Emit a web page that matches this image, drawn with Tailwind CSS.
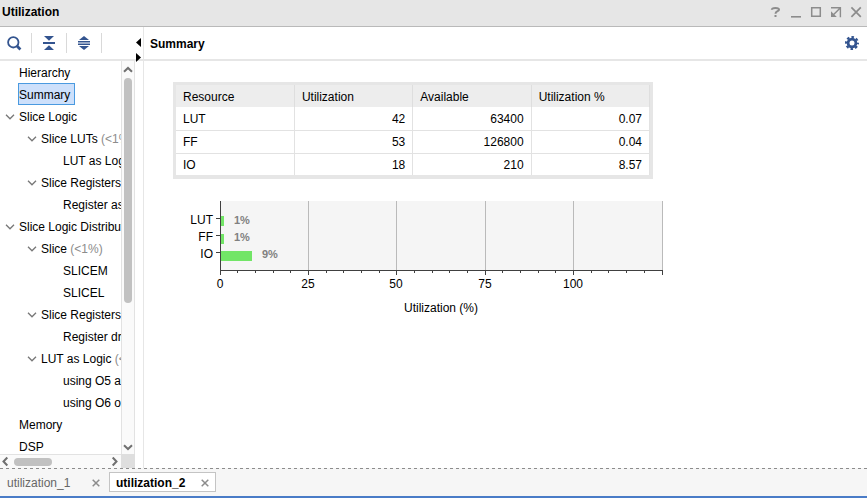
<!DOCTYPE html>
<html lang="en">
<head>
<meta charset="utf-8">
<title>Utilization</title>
<script src="https://cdn.jsdelivr.net/npm/@tailwindcss/browser@4"></script>
</head>
<body class="flex h-screen flex-col overflow-hidden bg-white font-['Liberation_Sans',Arial,sans-serif] text-[12px] leading-4 text-black">
<svg class="hidden" aria-hidden="true">
  <symbol id="down" viewBox="0 0 10 6"><path d="M1 .8 5 4.800 9 .8" fill="none" stroke="currentColor" stroke-width="1.3"/></symbol>
  <symbol id="chev" viewBox="0 0 10 7"><path d="M1 1.200 5 5 9 1.200" fill="none" stroke="currentColor" stroke-width="2"/></symbol>
  <symbol id="close" viewBox="0 0 8 8"><path d="M.7.7 7.300 7.300M7.300.7.7 7.300" fill="none" stroke="currentColor" stroke-width="1.5"/></symbol>
</svg>

<header class="flex h-[27px] shrink-0 items-center border-b border-[#b9b9b9] bg-[#e6e6e6] pr-[5px] pl-[2px]">
  <h1 class="grow pb-[2px] font-bold">Utilization</h1>
  <div class="flex items-center gap-2 pb-[2px] text-[#8c8c8c]">
    <button type="button" aria-label="Help" class="w-3"><svg class="h-3 w-3" viewBox="0 0 12 12" fill="none" stroke="currentColor" stroke-width="2"><path d="M1.800 3.800C1.800 2 3.500 1.900 5.500 1.900 7.800 1.900 9 2.200 9 3.700 9 5.400 5.500 5.100 5.500 7.800M5.500 9v2"/></svg></button>
    <button type="button" aria-label="Minimize" class="w-3"><svg class="h-3 w-3" viewBox="0 0 12 12"><path d="M1 10h10v1.600H1z" fill="currentColor"/></svg></button>
    <button type="button" aria-label="Maximize" class="w-3"><svg class="h-3 w-3" viewBox="0 0 12 12" fill="none" stroke="currentColor" stroke-width="1.5"><path d="M1.700 1.700h8.600v8.600H1.700z"/></svg></button>
    <button type="button" aria-label="Float" class="w-3"><svg class="h-3 w-3" viewBox="0 0 12 12" fill="none" stroke="currentColor" stroke-width="1.4"><path d="M1 1.700h9.400v9.600M9.700 2.400 3.400 8.700"/><path d="M1 5.200V11h5.800z" fill="currentColor" stroke="none"/></svg></button>
    <button type="button" aria-label="Close" class="w-3"><svg class="h-3 w-3" viewBox="0 0 12 12" fill="none" stroke="currentColor" stroke-width="1.7"><path d="M1.400 1.400l9.400 9.400M10.800 1.400 1.400 10.800"/></svg></button>
  </div>
</header>

<main class="relative flex min-h-0 grow">
  <section class="flex w-[144px] shrink-0 flex-col border-r border-[#e6e6e6]" aria-label="Report sections">
    <div class="flex h-[34px] shrink-0 items-center border-b-2 border-[#e6e6e6] pl-[6px] text-[#33548f]">
      <button type="button" aria-label="Search" class="mr-[9px] w-4"><svg class="h-4 w-4" viewBox="0 0 16 16" fill="none" stroke="currentColor"><circle cx="7.300" cy="7.300" r="5.200" stroke-width="1.8"/><path d="M11 11l3.400 3.400" stroke-width="2.8"/></svg></button>
      <span class="h-5 w-px bg-[#d9d9d9]"></span>
      <button type="button" aria-label="Collapse all" class="mx-[9px] w-4"><svg class="h-4 w-4" viewBox="0 0 16 16" fill="currentColor"><path d="M3 1h10L8 5.800zM2 7h12v2H2zM3 15h10L8 10.200z"/></svg></button>
      <span class="h-5 w-px bg-[#d9d9d9]"></span>
      <button type="button" aria-label="Expand all" class="mx-[9px] w-4"><svg class="h-4 w-4" viewBox="0 0 16 16" fill="currentColor"><path d="M3 5h10L8 1zM2 6h12v1.500H2zM2 8.500h12V10H2zM3 11h10l-5 4z"/></svg></button>
      <span class="h-5 w-px bg-[#d9d9d9]"></span>
    </div>
    <div class="mr-2 grid min-h-0 grow grid-cols-[minmax(0,1fr)_14px] grid-rows-[minmax(0,1fr)_14px]">
      <ul class="overflow-hidden pt-px leading-[22px] whitespace-nowrap">
        <li class="pl-[19px]">Hierarchy</li>
        <li class="flex h-[22px] pl-[19px]"><span class="h-5 bg-[#cde0fb] pr-1 outline-1 outline-[#4a9ae0]" aria-current="true">Summary</span></li>
        <li>
          <div class="flex items-center pl-[5px]"><button type="button" aria-label="Collapse Slice Logic" class="mr-1 text-[#777]"><svg class="h-[6px] w-[10px]"><use href="#down"/></svg></button>Slice Logic</div>
          <ul>
            <li>
              <div class="flex items-center pl-[27px]"><button type="button" aria-label="Collapse Slice LUTs" class="mr-1 text-[#777]"><svg class="h-[6px] w-[10px]"><use href="#down"/></svg></button>Slice LUTs&nbsp;<span class="text-[#8c8c8c]">(&lt;1%)</span></div>
              <ul><li class="pl-[63px]">LUT as Logic</li></ul>
            </li>
            <li>
              <div class="flex items-center pl-[27px]"><button type="button" aria-label="Collapse Slice Registers" class="mr-1 text-[#777]"><svg class="h-[6px] w-[10px]"><use href="#down"/></svg></button>Slice Registers</div>
              <ul><li class="pl-[63px]">Register as Flip Flop</li></ul>
            </li>
          </ul>
        </li>
        <li>
          <div class="flex items-center pl-[5px]"><button type="button" aria-label="Collapse Slice Logic Distribution" class="mr-1 text-[#777]"><svg class="h-[6px] w-[10px]"><use href="#down"/></svg></button>Slice Logic Distribution</div>
          <ul>
            <li>
              <div class="flex items-center pl-[27px]"><button type="button" aria-label="Collapse Slice" class="mr-1 text-[#777]"><svg class="h-[6px] w-[10px]"><use href="#down"/></svg></button>Slice&nbsp;<span class="text-[#8c8c8c]">(&lt;1%)</span></div>
              <ul><li class="pl-[63px]">SLICEM</li><li class="pl-[63px]">SLICEL</li></ul>
            </li>
            <li>
              <div class="flex items-center pl-[27px]"><button type="button" aria-label="Collapse Slice Registers" class="mr-1 text-[#777]"><svg class="h-[6px] w-[10px]"><use href="#down"/></svg></button>Slice Registers</div>
              <ul><li class="pl-[63px]">Register driven</li></ul>
            </li>
            <li>
              <div class="flex items-center pl-[27px]"><button type="button" aria-label="Collapse LUT as Logic" class="mr-1 text-[#777]"><svg class="h-[6px] w-[10px]"><use href="#down"/></svg></button>LUT as Logic&nbsp;<span class="text-[#8c8c8c]">(&lt;1%)</span></div>
              <ul><li class="pl-[63px]">using O5 and O6</li><li class="pl-[63px]">using O6 output only</li></ul>
            </li>
          </ul>
        </li>
        <li class="pl-[19px]">Memory</li>
        <li class="pl-[19px]">DSP</li>
      </ul>
      <div class="flex flex-col items-center border-x border-[#e2e2e2] bg-[#fafafa] text-[#707070]">
        <button type="button" aria-label="Scroll up" class="flex h-[17px] items-center"><svg class="h-[7px] w-[10px] rotate-180"><use href="#chev"/></svg></button>
        <div class="flex w-2 grow flex-col"><div class="h-[62%] rounded-full bg-[#c1c1c1]"></div></div>
        <button type="button" aria-label="Scroll down" class="flex h-[13px] items-center"><svg class="h-[7px] w-[10px]"><use href="#chev"/></svg></button>
      </div>
      <div class="flex items-center border-t border-[#e2e2e2] bg-[#fafafa] text-[#707070]">
        <button type="button" aria-label="Scroll left" class="flex w-[10px] justify-center"><svg class="h-[7px] w-[10px] shrink-0 rotate-90"><use href="#chev"/></svg></button>
        <div class="mx-1 grow"><div class="h-2 w-[42%] rounded-full bg-[#c1c1c1]"></div></div>
        <button type="button" aria-label="Scroll right" class="flex w-[12px] justify-center"><svg class="h-[7px] w-[10px] shrink-0 -rotate-90"><use href="#chev"/></svg></button>
      </div>
      <div class="bg-[#dedede]"></div>
    </div>
  </section>

  <div class="absolute top-[11px] left-[136px] flex flex-col gap-[6px]">
    <button type="button" aria-label="Hide section list" class="h-[9px] w-[5px]"><svg class="block h-[9px] w-[5px]" viewBox="0 0 5 9"><path d="M5 0v9L0 4.500z"/></svg></button>
    <button type="button" aria-label="Show section list" class="h-[9px] w-[5px]"><svg class="block h-[9px] w-[5px]" viewBox="0 0 5 9"><path d="M0 0v9l5-4.500z"/></svg></button>
  </div>

  <section class="flex min-w-0 grow flex-col">
    <div class="flex h-[34px] shrink-0 items-center border-b-2 border-[#e6e6e6] pr-2 pl-[6px]">
      <h2 class="grow pt-[2px] font-bold">Summary</h2>
      <button type="button" aria-label="Settings" class="text-[#33548f]"><svg class="h-[14px] w-[14px]" viewBox="0 0 14 14" fill="none" stroke="currentColor"><circle cx="7" cy="7" r="3.900" stroke-width="2.8"/><circle cx="7" cy="7" r="5.900" stroke-width="2.2" stroke-dasharray="2.5 2.134" stroke-dashoffset="1.25"/></svg></button>
    </div>
    <div class="min-h-0 grow overflow-hidden pt-[21px] pl-[29px]">
      <div class="w-[480px] max-w-full border-3 border-b-4 border-[#e6e6e6]">
        <table class="w-full table-fixed border-collapse">
          <thead>
            <tr class="h-[22px] bg-[#ededed] text-left">
              <th class="border-r border-[#dedede] px-[7px] pt-[2px] font-normal">Resource</th>
              <th class="border-r border-[#dedede] px-[7px] pt-[2px] font-normal">Utilization</th>
              <th class="border-r border-[#dedede] px-[7px] pt-[2px] font-normal">Available</th>
              <th class="border-r border-[#dedede] px-[7px] pt-[2px] font-normal">Utilization %</th>
            </tr>
          </thead>
          <tbody class="text-right">
            <tr class="h-[23px] border-b border-[#e2e2e2]"><td class="border-r border-[#e2e2e2] px-[7px] pt-px text-left">LUT</td><td class="border-r border-[#e2e2e2] px-[7px] pt-px">42</td><td class="border-r border-[#e2e2e2] px-[7px] pt-px">63400</td><td class="border-r border-[#e2e2e2] px-[7px] pt-px">0.07</td></tr>
            <tr class="h-[23px] border-b border-[#e2e2e2]"><td class="border-r border-[#e2e2e2] px-[7px] pt-px text-left">FF</td><td class="border-r border-[#e2e2e2] px-[7px] pt-px">53</td><td class="border-r border-[#e2e2e2] px-[7px] pt-px">126800</td><td class="border-r border-[#e2e2e2] px-[7px] pt-px">0.04</td></tr>
            <tr class="h-[22px]"><td class="border-r border-[#e2e2e2] px-[7px] pt-px text-left">IO</td><td class="border-r border-[#e2e2e2] px-[7px] pt-px">18</td><td class="border-r border-[#e2e2e2] px-[7px] pt-px">210</td><td class="border-r border-[#e2e2e2] px-[7px] pt-px">8.57</td></tr>
          </tbody>
        </table>
      </div>
      <svg class="mt-[22px] block h-[120px] w-[500px]" viewBox="0 0 500 120" role="img" aria-label="Utilization (%) by resource">
        <path d="M47 0h443v69H47z" fill="#f5f5f5"/>
        <path d="M135.500 0v69M223.500 0v69M312.500 0v69M400.500 0v69M489.500 0v69" stroke="#bababa"/>
        <path d="M48 15h3v10h-3zM48 33h3v10h-3zM48 50h31v10H48z" fill="#72e567"/>
        <path d="M47.500 0v74M43 17.500h4M43 34.500h4M43 51.500h4M47 69.500h443M64.500 70v2M82.500 70v2M100.500 70v2M117.500 70v2M135.500 70v4M153.500 70v2M170.500 70v2M188.500 70v2M206.500 70v2M223.500 70v4M241.500 70v2M259.500 70v2M276.500 70v2M294.500 70v2M312.500 70v4M329.500 70v2M347.500 70v2M365.500 70v2M382.500 70v2M400.500 70v4M418.500 70v2M435.500 70v2M453.500 70v2M471.500 70v2M489.500 70v4" stroke="#404040"/>
        <g text-anchor="end"><text x="40" y="23">LUT</text><text x="40" y="40">FF</text><text x="40" y="57">IO</text></g>
        <g class="text-[11px] font-bold" fill="#808080"><text x="61" y="23">1%</text><text x="61" y="40">1%</text><text x="89" y="57">9%</text></g>
        <g text-anchor="middle"><text x="47" y="87">0</text><text x="135" y="87">25</text><text x="223" y="87">50</text><text x="312" y="87">75</text><text x="400" y="87">100</text><text x="268" y="111">Utilization (%)</text></g>
      </svg>
    </div>
  </section>
</main>

<footer class="flex h-[30px] shrink-0 flex-col border-b-2 border-[#4a7cc7] bg-[#f6f6f6]">
  <svg class="h-px w-full shrink-0" aria-hidden="true"><path d="M0 .5h4000" stroke="#8c8c8c" stroke-dasharray="3 3"/></svg>
  <nav class="flex pt-[3px]" aria-label="Reports">
    <div class="flex h-5 w-[109px] items-center justify-between pt-[2px] pr-[9px] pl-[7px]"><a href="#utilization_1" class="text-[#666]">utilization_1</a><button type="button" aria-label="Close utilization_1" class="text-[#8c8c8c]"><svg class="block h-2 w-2"><use href="#close"/></svg></button></div>
    <div class="flex h-5 w-[107px] items-center justify-between border border-[#c4c4c4] bg-white px-[6px] pt-[2px]"><a href="#utilization_2" class="font-bold" aria-current="page">utilization_2</a><button type="button" aria-label="Close utilization_2" class="text-[#8c8c8c]"><svg class="block h-2 w-2"><use href="#close"/></svg></button></div>
  </nav>
</footer>
</body>
</html>
